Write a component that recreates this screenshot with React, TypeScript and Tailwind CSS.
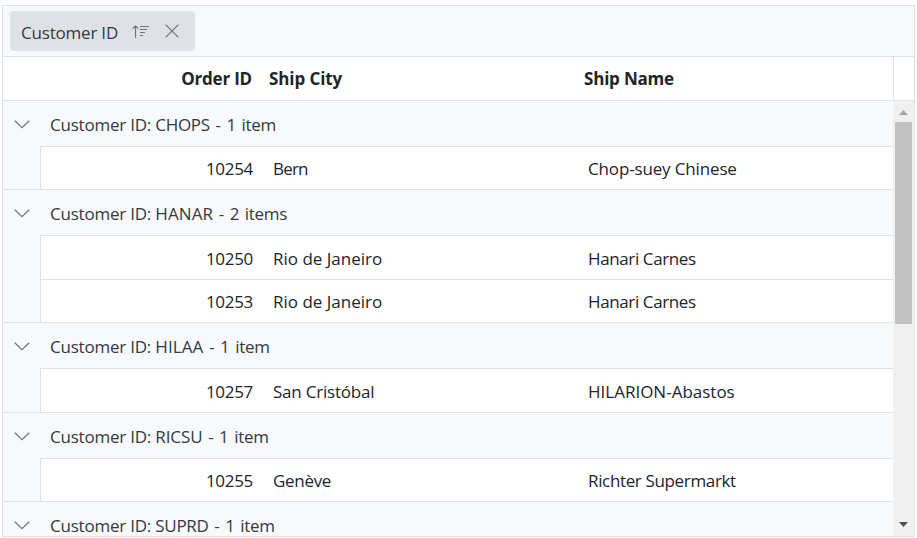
type Order = { id: string; city: string; name: string; h: string; cityCls: string; nameCls: string };
type Group = { code: string; count: string; cls: string; orders: Order[] };

const groups: Group[] = [
  { code: 'CHOPS', count: '1 item', cls: 'tracking-[-0.3px]', orders: [
    { id: '10254', city: 'Bern', name: 'Chop-suey Chinese', h: 'h-[43px]', cityCls: 'tracking-[-0.8px]', nameCls: 'tracking-[-0.15px]' },
  ] },
  { code: 'HANAR', count: '2 items', cls: 'tracking-[0.1px]', orders: [
    { id: '10250', city: 'Rio de Janeiro', name: 'Hanari Carnes', h: 'h-[44px]', cityCls: 'tracking-normal', nameCls: 'tracking-[-0.38px]' },
    { id: '10253', city: 'Rio de Janeiro', name: 'Hanari Carnes', h: 'h-[43px]', cityCls: 'tracking-normal', nameCls: 'tracking-[-0.38px]' },
  ] },
  { code: 'HILAA', count: '1 item', cls: 'tracking-[0.1px]', orders: [
    { id: '10257', city: 'San Cristóbal', name: 'HILARION-Abastos', h: 'h-[44px]', cityCls: 'tracking-[-0.22px]', nameCls: 'tracking-normal' },
  ] },
  { code: 'RICSU', count: '1 item', cls: 'tracking-[-0.1px]', orders: [
    { id: '10255', city: 'Genève', name: 'Richter Supermarkt', h: 'h-[43px]', cityCls: 'tracking-[-0.3px]', nameCls: 'tracking-[-0.35px]' },
  ] },
  { code: 'SUPRD', count: '1 item', cls: 'tracking-[-0.3px]', orders: [] },
];

function Chevron() {
  return (
    <svg width="16" height="9" viewBox="0 0 16 9" fill="none" stroke="#6c757d" strokeWidth="1.2" className="mt-[2px] shrink-0">
      <path d="M0.8 0.8 L8 7.6 L15.2 0.8" />
    </svg>
  );
}

function GroupRow({ group }: { group: Group }) {
  return (
    <section className="shrink-0">
      <div className="flex h-[45px] items-center pl-[11px]">
        <Chevron />
        <span className="ml-[20px] whitespace-pre pt-[2px] text-[#343a40]">
          <span className="tracking-[-0.22px]">Customer ID: </span>
          <span className={group.cls}>{group.code}</span>
          <span className="tracking-[-0.3px] [word-spacing:1.6px]">{` - ${group.count}`}</span>
        </span>
      </div>
      {group.orders.length > 0 && (
        <div className="border-b border-[#dee2e6] pl-[37px]">
          {group.orders.map((o) => (
            <div key={o.id} className={`flex items-center border-l border-t border-[#dee2e6] bg-white pt-[2px] text-[#212529] ${o.h}`}>
              <span className="w-[212px] text-right tracking-[-0.3px]">{o.id}</span>
              <span className={`ml-[20px] w-[315px] whitespace-nowrap ${o.cityCls}`}>{o.city}</span>
              <span className={`whitespace-nowrap ${o.nameCls}`}>{o.name}</span>
            </div>
          ))}
        </div>
      )}
    </section>
  );
}

export default function App() {
  return (
    <main className="h-[538px] w-[917px] overflow-hidden bg-white pl-[2px] pt-[5px] font-['Open_Sans','Noto_Sans',sans-serif] text-[17px] leading-[24px]">
      <div className="flex h-[532px] w-[913px] flex-col border border-[#dee2e6]">
        <div className="h-[51px] shrink-0 border-b border-[#dee2e6] bg-[#f8f9fa] pl-[7px] pt-[5px]">
          <div className="flex h-[40px] w-[185px] items-center rounded-[4px] bg-[#dee2e6] pl-[11px] text-[#343a40]">
            <span className="w-[111px] whitespace-nowrap pt-[4px] tracking-[-0.2px]">Customer ID</span>
            <svg className="mt-[2px]" width="17" height="14" viewBox="0 0 17 14" fill="none" stroke="#6c757d" strokeWidth="1.1">
              <path d="M3.5 13V1 M0.8 3.7L3.5 1L6.2 3.7 M8 1.5H17 M8 4.5H15 M8 7.5H13 M8 10.5H11" />
            </svg>
            <svg className="ml-[16px] -mt-[1px]" width="14" height="14" viewBox="0 0 14 14" fill="none" stroke="#6c757d" strokeWidth="1.2">
              <path d="M0.6 0.6L13.4 13.4M13.4 0.6L0.6 13.4" />
            </svg>
          </div>
        </div>
        <header className="flex h-[44px] shrink-0 border-b border-[#dee2e6] font-bold text-[#212529]">
          <div className="flex w-[891px] items-center border-r border-[#dee2e6]">
            <span className="w-[249px] text-right tracking-[-0.2px]">Order ID</span>
            <span className="ml-[17px] w-[315px] tracking-[-0.1px]">Ship City</span>
            <span className="tracking-[-0.2px]">Ship Name</span>
          </div>
        </header>
        <div className="flex min-h-0 flex-1">
          <div className="flex w-[890px] flex-col overflow-hidden bg-[#f8f9fa]">
            {groups.map((g) => <GroupRow key={g.code} group={g} />)}
          </div>
          <div className="flex w-[21px] flex-col items-center bg-[#f0f0f0]">
            <svg className="mt-[9px] shrink-0" width="9" height="5" viewBox="0 0 9 5"><path d="M0 5L4.5 0L9 5Z" fill="#a3a3a3" /></svg>
            <div className="mt-[7px] h-[202px] w-[17px] bg-[#c1c1c1]" />
            <svg className="mb-[9px] mt-auto shrink-0" width="9" height="5" viewBox="0 0 9 5"><path d="M0 0L4.5 5L9 0Z" fill="#505050" /></svg>
          </div>
        </div>
      </div>
    </main>
  );
}
